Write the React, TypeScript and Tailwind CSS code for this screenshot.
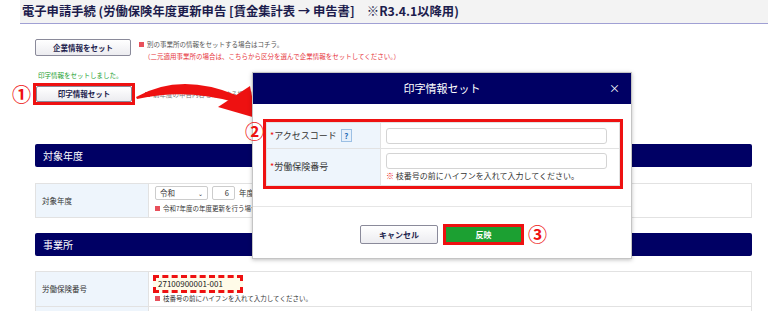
const jp = "font-['Noto_Sans_CJK_JP','Noto_Sans',sans-serif]"

const SectionHeader = ({ title }: { title: string }) => (
  <div className="h-[23px] rounded-[2px] bg-[#000064] flex items-center pl-[8px] text-[10px] text-white">
    {title}
  </div>
)

const Note = ({ children, className = '' }: { children: React.ReactNode; className?: string }) => (
  <div className={`flex items-center text-[6.5px] leading-[9px] text-[#333] ${className}`}>
    <span className="inline-block w-[5px] h-[5px] bg-[#e8505b] mr-[3px]" />
    {children}
  </div>
)

const Arrow = () => (
  <svg className="absolute left-0 top-0 pointer-events-none" width="768" height="311" viewBox="0 0 768 311">
    <path d="M136,97 Q180,72 236,95 L234,102 Q185,88 137,99 Z" fill="#ee1111" />
    <polygon points="218,107 250,86 256,118" fill="#ee1111" />
  </svg>
)

export default function App() {
  return (
    <div className={`relative w-[768px] h-[311px] overflow-hidden bg-white ${jp}`}>
      {/* title */}
      <div className="ml-[20px] h-[24px] bg-[#f3f3f3] border-b border-[#a0a0d4] flex items-center pl-[2px] text-[12.3px] font-bold text-[#1c1c4c] whitespace-nowrap">
        電子申請手続 (労働保険年度更新申告 [賃金集計表 → 申告書]　※R3.4.1以降用)
      </div>

      <div className="pl-[35px] pr-[16px]">
        {/* 企業情報 */}
        <div className="mt-[15px] flex items-start">
          <button className="w-[96px] h-[17px] border border-[#8a8a9a] rounded-[2px] bg-gradient-to-b from-white to-[#ececf0] text-[7.5px] font-bold text-[#1c1c4c]">
            企業情報をセット
          </button>
          <div className="ml-[8px] -mt-[1px] text-[6.5px] leading-[12px] whitespace-nowrap">
            <div className="flex items-center text-[#555]">
              <span className="inline-block w-[5px] h-[5px] bg-[#e8505b] mr-[3px]" />
              別の事業所の情報をセットする場合はコチラ。
            </div>
            <div className="ml-[5px] text-[#e6343c]">（二元適用事業所の場合は、こちらから区分を選んで企業情報をセットしてください。）</div>
          </div>
        </div>

        <div className="mt-[9px] ml-[3px] text-[6.5px] leading-[9px] text-[#22a030]">印字情報をセットしました。</div>

        {/* 印字情報セット */}
        <div className="mt-[3px] -ml-[23px] flex items-center">
          <span className="w-[18px] text-[19px] leading-[20px] font-bold text-[#ee1111] text-center">①</span>
          <div className="ml-[3px] border-[3px] border-[#ee1111]">
            <button className="block w-[96px] h-[16px] border border-[#8a8a9a] rounded-[2px] bg-gradient-to-b from-white to-[#ececf0] text-[7.5px] font-bold text-[#1c1c4c]">
              印字情報セット
            </button>
          </div>
          <Note className="ml-[10px] text-[#777]">前年度の申告内容を印字する場合はこちら。</Note>
        </div>

        {/* 対象年度 */}
        <div className="mt-[39px]">
          <SectionHeader title="対象年度" />
        </div>
        <div className="mt-[16px] flex h-[35px] border border-[#e2e2e2]">
          <div className="w-[113px] bg-[#eef5fc] border-r border-[#e2e2e2] flex items-center pl-[6px] text-[7.5px] text-[#333]">
            対象年度
          </div>
          <div className="pl-[6px] pt-[2px]">
            <div className="flex items-center gap-[4px]">
              <div className="w-[53px] h-[14px] border border-[#ccc] rounded-[2px] flex items-center justify-between px-[4px] text-[7.5px] text-[#333]">
                <span>令和</span>
                <span className="text-[6px]">⌄</span>
              </div>
              <div className="w-[23px] h-[14px] border border-[#ccc] rounded-[2px] flex items-center justify-end pr-[5px] text-[7.5px] text-[#333]">
                6
              </div>
              <span className="text-[7.5px] text-[#333]">年度</span>
            </div>
            <Note className="mt-[4px]">令和7年度の年度更新を行う場合は、「令和6年度」を選択してください。</Note>
          </div>
        </div>

        {/* 事業所 */}
        <div className="mt-[15px]">
          <SectionHeader title="事業所" />
        </div>
        <div className="mt-[15px] border border-[#e2e2e2]">
          <div className="flex h-[35px] border-b border-[#e2e2e2]">
            <div className="w-[113px] bg-[#eef5fc] border-r border-[#e2e2e2] flex items-center pl-[6px] text-[7.5px] text-[#333]">
              労働保険番号
            </div>
            <div className="pl-[4px] pt-[3px]">
              <div className="w-[90px] h-[18px] border-[3px] border-dashed border-[#ee1111] bg-[#fffbe8] flex items-center pl-[2px] text-[8px] text-[#222]">
                27100900001-001
              </div>
              <Note className="mt-[1px] ml-[2px]">枝番号の前にハイフンを入れて入力してください。</Note>
            </div>
          </div>
          <div className="flex h-[20px]">
            <div className="w-[113px] bg-[#eef5fc] border-r border-[#e2e2e2]" />
          </div>
        </div>
      </div>

      <Arrow />

      {/* modal */}
      <div className="absolute left-[252px] top-[72px] w-[380px] h-[187px] bg-white border border-[#c4c4c4] shadow-[0_1px_4px_rgba(0,0,0,0.25)] flex flex-col">
        <div className="relative h-[31px] bg-[#000064] flex items-center justify-center text-[11px] text-white">
          印字情報セット
          <span className="absolute right-[11px] top-[8px] text-[11px] leading-[14px]">×</span>
        </div>

        <div className="relative mt-[15px] ml-[10px] mr-[8px] border-[3px] border-[#ee1111]">
          <span className="absolute -left-[21px] -top-[2px] text-[19px] leading-[22px] font-bold text-[#ee1111]">②</span>
          <div className="border border-[#e2e2e2]">
            <div className="flex h-[26px] border-b border-[#e2e2e2]">
              <div className="w-[114px] bg-[#eef5fc] border-r border-[#e2e2e2] flex items-center pl-[3px] text-[9px] text-[#333]">
                <span className="text-[#ee1111]">*</span>アクセスコード
                <span className="ml-[4px] w-[11px] h-[13px] border border-[#9cc0e4] bg-[#e6f0fb] flex items-center justify-center text-[8px] font-bold text-[#2a6fb8]">?</span>
              </div>
              <div className="flex-1 flex items-center pl-[5px] pr-[12px]">
                <div className="w-full h-[16px] border border-[#d4d4d4] rounded-[3px]" />
              </div>
            </div>
            <div className="flex h-[36px]">
              <div className="w-[114px] bg-[#eef5fc] border-r border-[#e2e2e2] flex items-center pl-[3px] text-[9px] text-[#333]">
                <span className="text-[#ee1111]">*</span>労働保険番号
              </div>
              <div className="flex-1 pl-[5px] pr-[12px] pt-[4px]">
                <div className="w-full h-[16px] border border-[#d4d4d4] rounded-[3px]" />
                <div className="mt-[2px] text-[8px] leading-[10px] text-[#333] whitespace-nowrap">
                  <span className="text-[#ee1111]">※</span> 枝番号の前にハイフンを入れて入力してください。
                </div>
              </div>
            </div>
          </div>
        </div>

        <div className="mt-[17px] border-t border-[#e6e6e6] flex-1 flex justify-center pt-[17px]">
          <div className="relative flex items-start">
            <button className="mt-[1px] w-[78px] h-[19px] border border-[#8a8a9a] rounded-[2px] bg-gradient-to-b from-white to-[#ececf0] text-[8px] font-bold text-[#1c1c4c]">
              キャンセル
            </button>
            <div className="ml-[5px] border-[3px] border-[#ee1111]">
              <button className="block w-[75px] h-[15px] bg-[#1ca032] text-[8px] font-bold text-white">
                反映
              </button>
            </div>
            <span className="absolute -right-[23px] -top-[1px] text-[19px] leading-[22px] font-bold text-[#ee1111]">③</span>
          </div>
        </div>
      </div>
    </div>
  )
}
